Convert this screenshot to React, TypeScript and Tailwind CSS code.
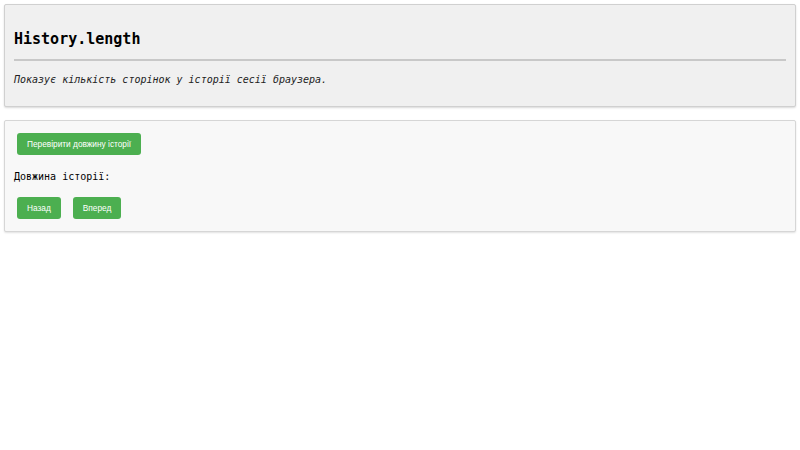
const mono = "font-['DejaVu_Sans_Mono',monospace]";
const btn =
  "h-[22px] px-[10px] rounded-[3px] bg-[#4caf50] text-white text-[8.3px] font-['Liberation_Sans',sans-serif]";

export default function App() {
  return (
    <div className={`bg-white min-h-[450px] p-[4px] ${mono} text-[10px] text-black`}>
      <section className="border border-[#d0d0d0] bg-[#f0f0f0] rounded-[2px] shadow-[0_1px_2px_rgba(0,0,0,0.15)] p-[9px]">
        <h2 className="mt-[16px] text-[15px] leading-[18px] font-bold">History.length</h2>
        <hr className="mt-[11px] border-t-2 border-[#c8c8c8]" />
        <p className="mt-[13px] mb-[11px] italic leading-[12px] text-[#222]">
          Показує кількість сторінок у історії сесії браузера.
        </p>
      </section>

      <section className="mt-[13px] border border-[#d6d6d6] bg-[#f8f8f8] rounded-[2px] shadow-[0_1px_2px_rgba(0,0,0,0.12)] p-[9px]">
        <button className={`mt-[3px] ml-[3px] ${btn}`}>Перевірити довжину історії</button>
        <p className="mt-[16px] leading-[12px]">Довжина історії:</p>
        <div className="mt-[14px] mb-[3px] ml-[3px] flex gap-[12px]">
          <button className={btn}>Назад</button>
          <button className={btn}>Вперед</button>
        </div>
      </section>
    </div>
  );
}
